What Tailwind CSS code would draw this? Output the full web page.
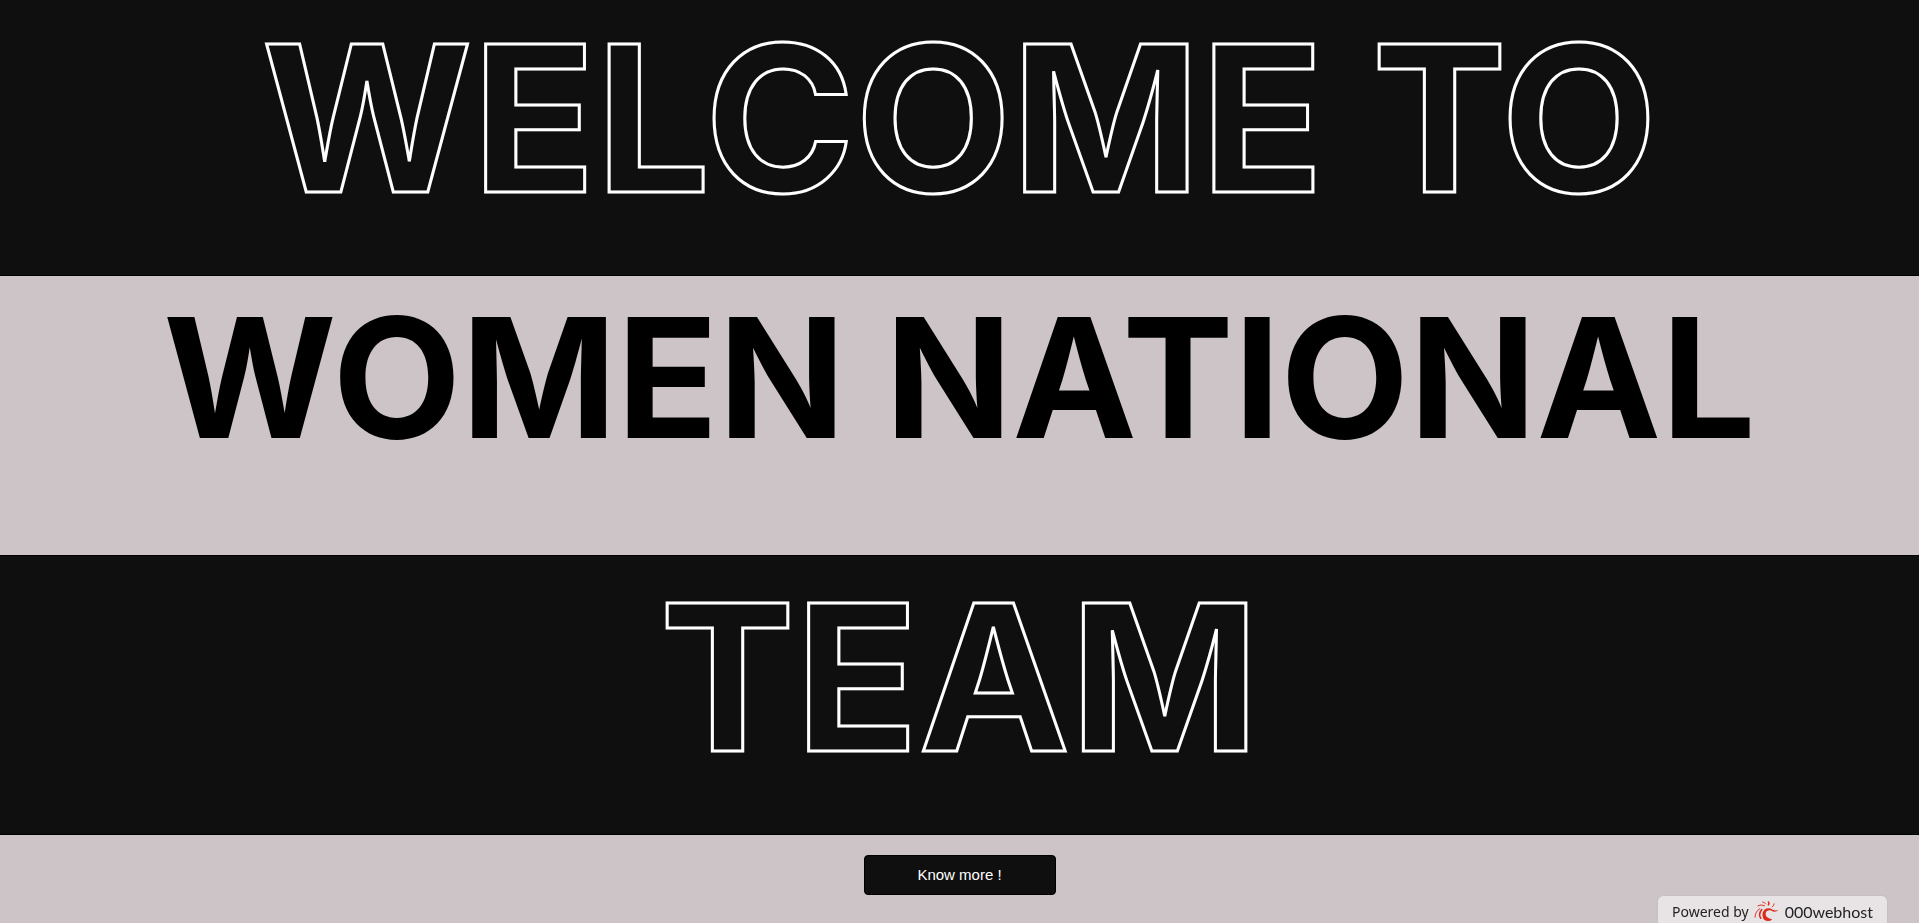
<!DOCTYPE html>
<html lang="en"><head><meta charset="utf-8"><title>Women National Team</title>
<script src="https://cdn.jsdelivr.net/npm/@tailwindcss/browser@4"></script></head>
<body class="flex min-h-screen flex-col bg-[#cdc4c7] font-['Inter',sans-serif] text-center">
<h1 class="font-bold">
<span class="block border-b border-black bg-[#0f0f0f] pb-[39px] text-[203px] leading-[236px] text-transparent [-webkit-text-stroke:3px_white]">WELCOME TO</span>
<span class="block pb-[77px] text-[167px] leading-[202px] text-black">WOMEN NATIONAL</span>
<span class="block border-y border-black bg-[#0f0f0f] pt-[3px] pb-[39px] text-[203px] leading-[236px] text-transparent [-webkit-text-stroke:3px_white]">TEAM</span>
</h1>
<main class="pt-5">
<button class="mx-auto block h-10 w-48 rounded border border-black bg-[#0f0f0f] font-['Liberation_Sans',sans-serif] text-[15px] text-white">Know more !</button>
</main>
<a href="#" class="fixed right-8 bottom-0 flex h-[27px] w-[229px] items-center justify-between rounded-t-[5px] bg-[#e8e4e6] px-[14px] pt-1 font-['Noto_Sans',sans-serif] text-sm text-[#222] shadow-[0_0_1px_#999]">
<span>Powered by</span>
<svg class="h-[21px] w-[26px]" viewBox="0 0 27 22" fill="#dc2a1b" aria-hidden="true">
<path d="M26 9Q22 13 18 10Q13 9 12 13Q12 18 19 19Q15 23 10 19Q7 13 11 9Q15 6 19 9Q23 11 26 9Z"/>
<g fill="none" stroke="#dc2a1b" stroke-linecap="round"><path stroke-width="1.6" d="M8 9Q4 14 7 18M15 1Q16 2 15 4"/><path stroke-width="1" d="M6 8Q1 11 1 17M4 5Q7 3 11 5M9 1Q11 1 12 3M21 3Q21 5 19 6"/></g>
</svg>
<span class="font-['Lato',sans-serif] text-base">000webhost</span>
</a>
</body></html>
